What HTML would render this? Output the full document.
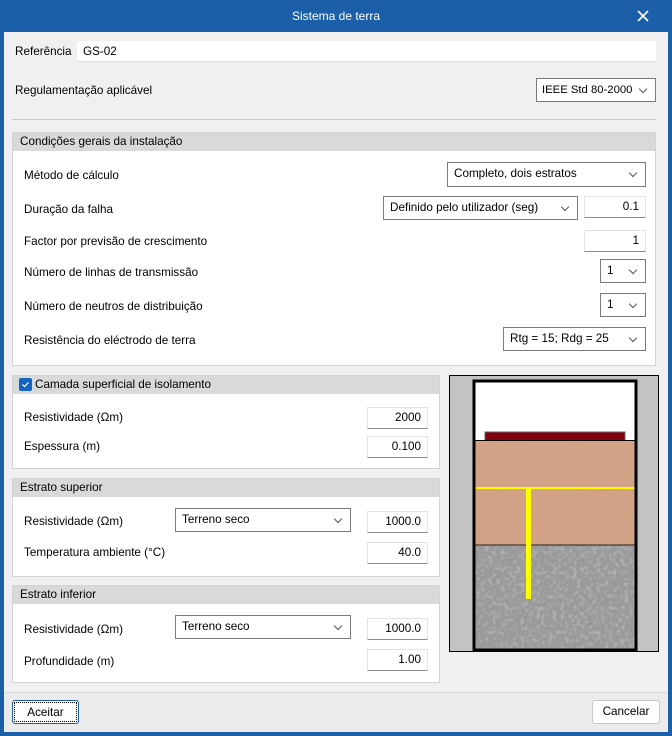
<!DOCTYPE html>
<html><head><meta charset="utf-8"><style>
*{box-sizing:border-box;margin:0;padding:0}
body{width:672px;height:736px;background:#1a5fa8;font-family:"Liberation Sans",sans-serif;font-size:11.7px;color:#000;position:relative;overflow:hidden}
.a{position:absolute}
.t{position:absolute;white-space:nowrap;line-height:14px}
.body{position:absolute;left:4px;top:32px;width:664px;height:700px;background:#f0f0f0}
.inp{position:absolute;background:#fff;border:1px solid #e3e3e3;border-bottom:1px solid #8a8a8a;text-align:right;padding-right:6px;line-height:19px}
.sel{position:absolute;background:#fff;border:1px solid #7a7a7a;padding-left:6px;line-height:22px}
.sel:after{content:"";position:absolute;right:9px;top:7px;width:5px;height:5px;border-right:1px solid #555;border-bottom:1px solid #555;transform:rotate(45deg)}
.box{position:absolute;background:#fff;border:1px solid #d4d4d4}
.hd{position:absolute;left:0;top:0;right:0;height:18px;background:#d9d9d9;padding-left:7px;line-height:18px}
.btn{position:absolute;background:#fdfdfd;border:1px solid #c8c8c8;border-radius:3px;text-align:center;line-height:22px}
</style></head><body>
<div class="t" style="left:0;width:672px;top:9px;text-align:center;color:#fff;font-size:12px">Sistema de terra</div>
<svg class="a" style="left:637px;top:10px" width="12" height="12"><path d="M1 1L11 11M11 1L1 11" stroke="#fff" stroke-width="1.6"/></svg>
<div class="body"></div>
<div class="t" style="left:15px;top:45px">Referência</div>
<div class="a" style="left:77px;top:41px;width:579px;height:21px;background:#fff;border-bottom:1px solid #e0e0e0"></div>
<div class="t" style="left:83px;top:45px">GS-02</div>
<div class="t" style="left:15px;top:84px">Regulamentação aplicável</div>
<div class="sel" style="left:536px;top:78px;width:120px;height:24px;padding-left:5px;font-size:11.3px">IEEE Std 80-2000</div>
<div class="a" style="left:12px;top:119px;width:644px;height:1px;background:#c8c8c8"></div>

<div class="box" style="left:12px;top:132px;width:644px;height:234px"><div class="hd">Condições gerais da instalação</div></div>
<div class="t" style="left:24px;top:169px">Método de cálculo</div>
<div class="sel" style="left:447px;top:162px;width:199px;height:25px">Completo, dois estratos</div>
<div class="t" style="left:24px;top:203px">Duração da falha</div>
<div class="sel" style="left:383px;top:196px;width:195px;height:24px">Definido pelo utilizador (seg)</div>
<div class="inp" style="left:584px;top:196px;width:62px;height:22px">0.1</div>
<div class="t" style="left:24px;top:235px">Factor por previsão de crescimento</div>
<div class="inp" style="left:584px;top:230px;width:62px;height:22px">1</div>
<div class="t" style="left:24px;top:266px">Número de linhas de transmissão</div>
<div class="sel" style="left:600px;top:259px;width:46px;height:24px">1</div>
<div class="t" style="left:24px;top:300px">Número de neutros de distribuição</div>
<div class="sel" style="left:600px;top:293px;width:46px;height:24px">1</div>
<div class="t" style="left:24px;top:334px">Resistência do eléctrodo de terra</div>
<div class="sel" style="left:503px;top:327px;width:143px;height:24px">Rtg = 15; Rdg = 25</div>

<div class="box" style="left:12px;top:375px;width:428px;height:94px"><div class="hd" style="padding-left:22px">Camada superficial de isolamento</div></div>
<div class="a" style="left:19px;top:378px;width:13px;height:13px;background:#1565c0;border-radius:2px"></div>
<svg class="a" style="left:19px;top:378px" width="13" height="13"><path d="M3.5 6.5L5.5 8.5L9.5 4.5" stroke="#fff" stroke-width="1.2" fill="none"/></svg>
<div class="t" style="left:24px;top:411px">Resistividade (Ωm)</div>
<div class="inp" style="left:367px;top:407px;width:61px;height:22px">2000</div>
<div class="t" style="left:24px;top:440px">Espessura (m)</div>
<div class="inp" style="left:367px;top:436px;width:61px;height:22px">0.100</div>

<div class="box" style="left:12px;top:478px;width:428px;height:99px"><div class="hd">Estrato superior</div></div>
<div class="t" style="left:24px;top:515px">Resistividade (Ωm)</div>
<div class="sel" style="left:175px;top:508px;width:176px;height:24px">Terreno seco</div>
<div class="inp" style="left:367px;top:511px;width:61px;height:22px">1000.0</div>
<div class="t" style="left:24px;top:546px">Temperatura ambiente (°C)</div>
<div class="inp" style="left:367px;top:542px;width:61px;height:22px">40.0</div>

<div class="box" style="left:12px;top:585px;width:428px;height:98px"><div class="hd">Estrato inferior</div></div>
<div class="t" style="left:24px;top:623px">Resistividade (Ωm)</div>
<div class="sel" style="left:175px;top:615px;width:176px;height:24px">Terreno seco</div>
<div class="inp" style="left:367px;top:618px;width:61px;height:22px">1000.0</div>
<div class="t" style="left:24px;top:655px">Profundidade (m)</div>
<div class="inp" style="left:367px;top:649px;width:61px;height:22px">1.00</div>

<svg class="a" style="left:449px;top:375px" width="210" height="277">
<defs>
<filter id="n1"><feTurbulence type="fractalNoise" baseFrequency="0.9" numOctaves="1" result="n"/><feColorMatrix type="matrix" values="0 0 0 0 0.55 0 0 0 0 0.35 0 0 0 0 0.25 0 0 0 1.2 -0.5"/><feComposite in2="SourceGraphic" operator="in"/></filter>
<filter id="n2"><feTurbulence type="fractalNoise" baseFrequency="0.25" numOctaves="2"/><feColorMatrix type="matrix" values="0 0 0 0 0.45 0 0 0 0 0.45 0 0 0 0 0.45 0 0 0 3 -1.4"/><feComposite in2="SourceGraphic" operator="in"/></filter>
</defs>
<rect x="0.5" y="0.5" width="209" height="276" fill="#c3c3c3" stroke="#000"/>
<rect x="25" y="6" width="162" height="269" fill="#fff" stroke="#000" stroke-width="3"/>
<rect x="36" y="57" width="140" height="9" fill="#800010" stroke="#666"/>
<rect x="26.5" y="66" width="159" height="104" fill="#d4a286"/>
<rect x="26.5" y="66" width="159" height="104" fill="#fff" filter="url(#n1)"/>
<rect x="26.5" y="170" width="159" height="103.5" fill="#9a9a9a"/>
<rect x="26.5" y="170" width="159" height="103.5" fill="#fff" filter="url(#n2)"/>
<line x1="26" y1="65.5" x2="186" y2="65.5" stroke="#000"/>
<line x1="26" y1="170" x2="186" y2="170" stroke="#222"/>
<rect x="26.5" y="112" width="159" height="2" fill="#ffff00"/>
<rect x="77" y="112" width="5" height="112" fill="#ffff00"/>
</svg>

<div class="a" style="left:4px;top:692px;width:664px;height:40px;background:#ebebeb;border-top:1px solid #dadada"></div>
<div class="btn" style="left:12px;top:700px;width:67px;height:24px;border:1px solid #1a5fa8"><div style="position:absolute;left:1px;top:1px;right:1px;bottom:1px;border:1px dotted #000;line-height:20px">Aceitar</div></div>
<div class="btn" style="left:592px;top:700px;width:68px;height:24px">Cancelar</div>
</body></html>
